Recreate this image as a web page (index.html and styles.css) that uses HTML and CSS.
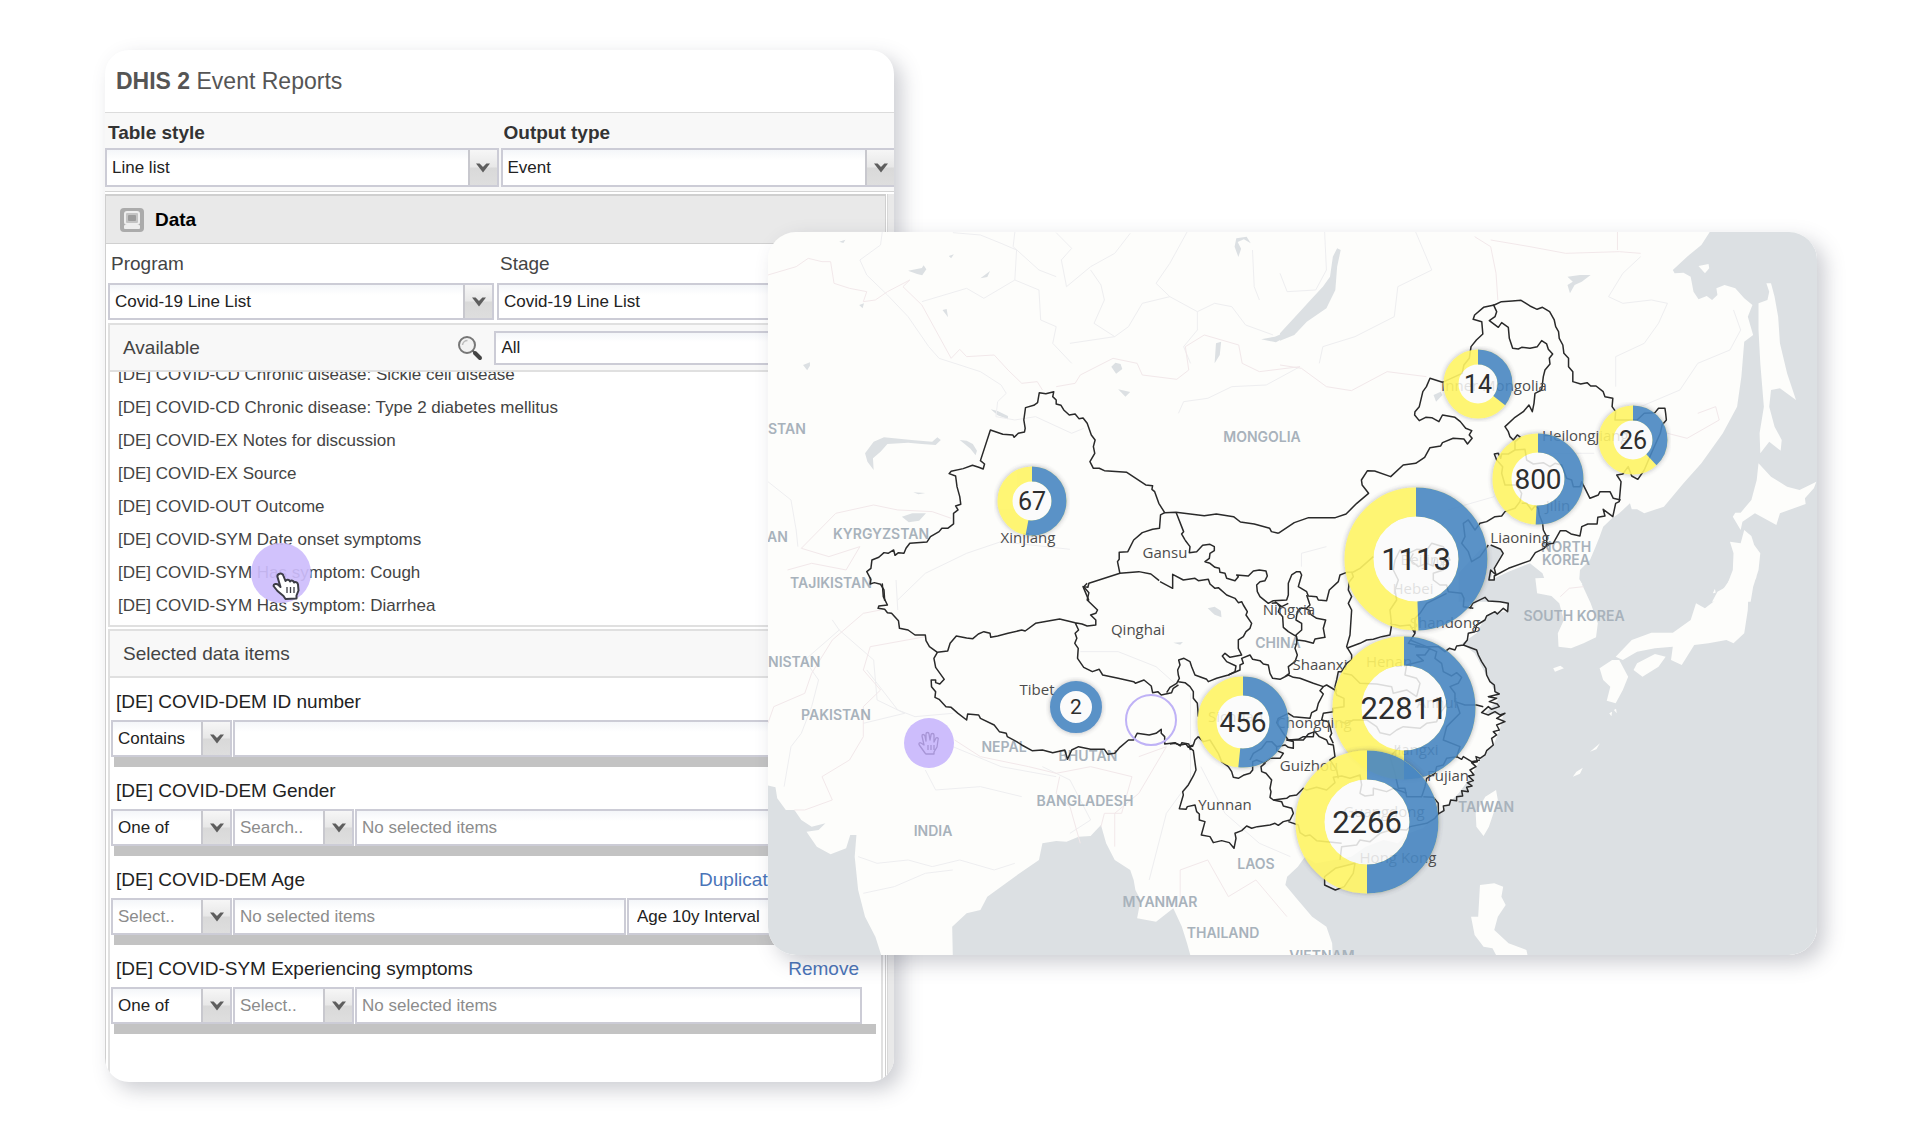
FILE: index.html
```html
<!DOCTYPE html>
<html lang="en">
<head>
<meta charset="utf-8">
<title>DHIS 2 Event Reports</title>
<link rel="stylesheet" href="styles.css">
</head>
<body>
<svg class="defs" width="0" height="0" aria-hidden="true">
  <symbol id="chevron" viewBox="0 0 16 12"><path d="M1 1.5h3.6L8 5l3.400-3.500H15L8 10.500z" fill="#5e5e5e"/></symbol>
</svg>
<main class="stage">
  <section class="report">
    <h1 class="report-title"><b>DHIS 2</b> Event Reports</h1>
    <div class="toolbar">
      <div class="field">
        <label for="style">Table style</label>
        <div class="combo tall"><select id="style"><option>Line list</option></select><span class="trigger"><svg><use href="#chevron"/></svg></span></div>
      </div>
      <div class="field">
        <label for="output">Output type</label>
        <div class="combo tall"><select id="output"><option>Event</option></select><span class="trigger"><svg><use href="#chevron"/></svg></span></div>
      </div>
    </div>
    <div class="body">
      <div class="panel">
        <h2 class="panel-title">
          <svg class="data-icon" viewBox="0 0 24 24"><rect width="24" height="24" rx="4" fill="#ababab"/><rect x="5" y="4" width="14" height="12" rx="2" fill="#c4c4c4" stroke="#eee" stroke-width="2"/><rect x="8" y="7" width="8" height="6" rx="1" fill="#9c9c9c"/><rect x="4" y="17" width="16" height="4" rx="1" fill="#eee"/></svg>
          Data
        </h2>
        <div class="pair">
          <div class="field">
            <label for="program">Program</label>
            <div class="combo"><select id="program"><option>Covid-19 Line List</option></select><span class="trigger"><svg><use href="#chevron"/></svg></span></div>
          </div>
          <div class="field">
            <label for="stage">Stage</label>
            <div class="combo"><select id="stage"><option>Covid-19 Line List</option></select><span class="trigger"><svg><use href="#chevron"/></svg></span></div>
          </div>
        </div>
        <div class="box">
          <div class="box-head">
            <label class="grow" for="filter">Available</label>
            <svg class="search-icon" viewBox="0 0 26 26"><circle cx="10" cy="10" r="8" fill="#f2f2f2" stroke="#777" stroke-width="2"/><path d="M5.500 10a5 5 0 0 1 5-4.500" fill="none" stroke="#bbb" stroke-width="1.500"/><path d="M15.500 15.500l3 3" stroke="#666" stroke-width="2"/><path d="M18 18l5 5" stroke="#444" stroke-width="4" stroke-linecap="round"/></svg>
            <input class="filter" id="filter" value="All">
          </div>
          <div class="list-wrap">
            <ul class="list">
              <li>[DE] COVID-CD Chronic disease: Sickle cell disease</li>
              <li>[DE] COVID-CD Chronic disease: Type 2 diabetes mellitus</li>
              <li>[DE] COVID-EX Notes for discussion</li>
              <li>[DE] COVID-EX Source</li>
              <li>[DE] COVID-OUT Outcome</li>
              <li>[DE] COVID-SYM Date onset symptoms</li>
              <li>[DE] COVID-SYM Has symptom: Cough</li>
              <li>[DE] COVID-SYM Has symptom: Diarrhea</li>
            </ul>
            <svg class="pointer" viewBox="0 0 60 60"><circle cx="30" cy="30" r="30" fill="#cdbdfc" fill-opacity=".92"/><path d="M28 31c2-1 4 0 4.500 2l2 5c1-2 4-1.500 4.500.500 1.500-1.500 3.500-1 4 1 2-1 3.500 0 4 2l.500 6-2 5v3l-11 .500-2-3-6-5-4-5c0-2 3-3 5-1l2 2-3-10c-.300-1 .500-2.500 1.500-3z" fill="#fff" stroke="#3c3c46" stroke-width="2" stroke-linejoin="round"/><path d="M36 44v6M39.500 44v6M43 44v6" stroke="#3c3c46" stroke-width="1.300"/></svg>
          </div>
        </div>
        <div class="box selected">
          <h3 class="box-head">Selected data items</h3>
          <div class="item">
            <div class="item-head"><label class="grow" for="id-op">[DE] COVID-DEM ID number</label><a href="#">Remove</a></div>
            <div class="row">
              <div class="combo short"><select id="id-op"><option>Contains</option></select><span class="trigger"><svg><use href="#chevron"/></svg></span></div>
              <input class="text" aria-label="ID number">
            </div>
          </div>
          <div class="item">
            <div class="item-head"><label class="grow" for="gender-op">[DE] COVID-DEM Gender</label><a href="#">Remove</a></div>
            <div class="row">
              <div class="combo short"><select id="gender-op"><option>One of</option></select><span class="trigger"><svg><use href="#chevron"/></svg></span></div>
              <div class="combo short"><input placeholder="Search.." aria-label="Search gender"><span class="trigger"><svg><use href="#chevron"/></svg></span></div>
              <input class="text" placeholder="No selected items" aria-label="Selected gender">
            </div>
          </div>
          <div class="item">
            <div class="item-head"><label class="grow" for="age-op">[DE] COVID-DEM Age</label><a href="#">Duplicate</a><a href="#">Remove</a></div>
            <div class="row">
              <div class="combo short"><input id="age-op" placeholder="Select.."><span class="trigger"><svg><use href="#chevron"/></svg></span></div>
              <input class="text" placeholder="No selected items" aria-label="Selected ages">
              <div class="combo interval"><select aria-label="Age interval"><option>Age 10y Interval</option></select><span class="trigger"><svg><use href="#chevron"/></svg></span></div>
            </div>
          </div>
          <div class="item">
            <div class="item-head"><label class="grow" for="sym-op">[DE] COVID-SYM Experiencing symptoms</label><a href="#">Remove</a></div>
            <div class="row">
              <div class="combo short"><select id="sym-op"><option>One of</option></select><span class="trigger"><svg><use href="#chevron"/></svg></span></div>
              <div class="combo short"><input placeholder="Select.." aria-label="Select symptom"><span class="trigger"><svg><use href="#chevron"/></svg></span></div>
              <input class="text" placeholder="No selected items" aria-label="Selected symptoms">
            </div>
          </div>
        </div>
      </div>
      <div class="scroll-strip"></div>
    </div>
  </section>

  <section class="map-card">
    <svg class="map" viewBox="0 0 1049 723" role="img" aria-label="Map of cases by province">
      <defs>
        <filter id="soft" x="-20%" y="-20%" width="140%" height="140%"><feDropShadow dx="0" dy="0" stdDeviation="2.500" flood-color="#445" flood-opacity=".45"/></filter>
      </defs>
      <rect width="1049" height="723" fill="#fdfdfb"/>

      <!-- sea -->
      <g class="sea">
        <g transform="translate(512 -12) scale(.3571 .3333)">
          <path d="M1207 30L1180 75 1140 110 1100 150 1105 160 1130 158 1150 170 1158 215 1172 238 1195 228 1210 240 1225 225 1222 205 1245 195 1275 205 1300 235 1323 255 1310 290 1325 345 1300 365 1292 470 1280 560 1240 640 1180 730 1130 790 1075 860 1020 880 1000 868 985 868 980 850 950 880 930 895 905 920 895 950 880 990 868 1020 840 1050 838 1080 860 1110 875 1145H1600V30z"/>
          <path d="M500 1060L560 990 590 975 625 995 600 1040 590 1080 640 1055 700 1030 735 1060 745 1090 715 1115 725 1145H500z"/>
          <path d="M170 90L160 85 148 110 140 170 120 200 90 235 60 270 0 340V362L40 345 75 305 130 265 155 210 160 140z"/>
          <path d="M805 170L840 165 870 165 845 185 825 195 812 220 805 195 820 185zM430 525l20-10 5 10-18 20z"/>
        </g>
        <g transform="translate(512 348) scale(.3571 .3333)">
          <path d="M590 0L560 35 545 70 570 55 635 70 635 95 600 95 570 120 550 160 510 190 545 220 570 270 600 330 610 360 575 400 625 405 615 450 600 490 560 540 535 590 500 640 445 700 400 745 360 760 330 790 290 780 240 800 200 830 150 840 100 850 70 830 50 860 20 890 15 915 50 960 90 1010 130 1040 146 1090 148 1135H1600V50z"/>
        </g>
        <g transform="translate(-8 348) scale(.3444 .3333)">
          <path d="M15 615L45 622 50 655 75 690 100 690 120 720 150 740 190 730 170 750 135 755 165 800 205 823 250 805 262 765 280 765 275 830 285 930 305 1010 335 1070 355 1135H15z"/>
          <path d="M560 1135L558 1040 600 1000 640 990 660 950 740 890 810 840 820 790 860 783 890 785 925 770 960 768 990 735 1005 790 1030 840 1075 870 1085 900 1090 930 1105 960 1095 1015 1150 1025 1200 985 1225 1040 1240 1090 1252 1135z"/>
          <path d="M1300 85l20-5 18 12 2 20-20-8zM1200 188l28-2-8 8z"/>
        </g>
        <g transform="translate(-8 -12) scale(.3444 .3333)">
          <path d="M305 700L330 665 360 652 440 660 500 665 515 652 525 660 510 675 470 672 430 668 370 672 350 695 328 715 330 750 312 725zM412 890l30-10 40 0-20 22-30 5zM430 152l40-8 5-8 8 12-12 18-15-4zM670 568l20 5 30 15v10l-30-12zM580 660l20 2 18 10 12 20-4 14-15-20zM1020 440l12-12 15 4 5 15-18 14zM1320 430l4-60 15-5-4 40zM1455 358l40-8 45-20 20-35 8-5v30l-30 25-40 22zM1378 80l5-25 30-5 12 20-20-12-18 8 10 20-8 25zM640 175l28-22-8 18zM1040 508l35 8-14 14zM125 435l20-8v10l-8 14zM288 255l14-5-4 15zM530 270l12-3 4 25zM230 65l18-6-6 10zM548 108l15-5-8 12zM445 817l35 2-20 4z"/>
        </g>
      </g>

      <!-- islands and peninsulas -->
      <g class="land">
        <g transform="translate(512 -12) scale(.3571 .3333)">
          <path d="M1375 190L1385 230 1395 290 1400 370 1420 460 1445 540 1400 505 1375 510 1370 560 1385 620 1405 660 1402 692 1370 665 1345 700 1343 640 1355 560 1345 430 1340 330 1340 250 1365 240 1370 215 1362 190z"/>
          <path d="M1340 730L1375 770 1420 800 1455 810 1502 785 1495 805 1470 835 1472 852 1400 880 1390 915 1330 880 1295 905 1290 930 1268 890 1275 878 1290 878 1320 840 1335 780z"/>
          <path d="M1300 930L1320 948 1328 975 1345 1000 1340 1050 1325 1100 1318 1145H1210L1225 1115 1250 1100 1268 1050 1270 1000 1260 965 1290 970z"/>
          <path d="M1172 138L1200 132 1202 145 1190 160z"/>
        </g>
        <g transform="translate(512 348) scale(.3571 .3333)">
          <path d="M715 -5L720 40 760 48 782 70 795 120 778 160 780 200 815 205 850 190 885 172 890 130 870 70 840 0 830 -10z"/>
          <path d="M940 230L985 180 1040 158 1100 158 1150 120 1165 70 1190 85 1220 60 1265 -10H1335L1312 30 1310 90 1300 160 1270 190 1250 180 1200 190 1160 195 1125 255 1095 240 1100 200 1050 205 1000 215 960 240z"/>
          <path d="M895 265L930 240 950 240 975 290 960 330 940 370 915 362 925 320 905 300zM1000 250L1050 222 1080 230 1060 260 1015 290 990 270zM765 265l20-8 10 8-25 10z"/>
          <path d="M605 630L610 660 585 740 570 768 550 740 548 700 575 650zM560 915L600 910 625 920 620 950 632 975 610 1010 600 1050 640 1090 690 1110 695 1135H610L595 1105 570 1100 545 1065 535 1010 555 1010zM125 890L155 865 210 850 205 880 180 920 155 930 125 915zM868 515l28-25-10 18zM820 590l10-15 18-12-8 18zM922 400l8-5-2 14zM935 390l6-4 2 14zM1212 40l6-14 2 12z"/>
        </g>
      </g>

      <!-- rivers and roads -->
      <g class="river">
        <g transform="translate(-8 -12) scale(.3444 .3333)">
          <path d="M355 36L350 75 290 120 310 165 370 225 430 290 490 380 520 415 640 455 700 495 715 520 690 545 685 590 740 600 800 590 905 640 940 625M560 38L640 45 700 70 745 90 740 180 650 235 600 205 470 245M740 36L735 80 810 150 860 170M860 38L905 85 875 120 890 200 960 140 1030 100 1075 40M740 180L810 210 815 300 860 320 850 370 905 430M960 150L990 195 1000 240 970 310 1030 350M1240 36L1190 130 1150 190 1190 230 1110 250 1070 320 1030 350 900 370M1190 230L1270 275 1320 250 1370 260 1410 315 1490 345M1270 275L1270 330 1230 380 1250 430M1430 90L1435 200 1450 240M23 785L90 840 105 930 110 980M400 1140L480 1060 600 1000 700 965 900 988M1215 580L1230 545 1300 535 1370 500 1470 495 1568 440"/>
        </g>
        <g transform="translate(-8 348) scale(.3444 .3333)">
          <path d="M210 120L230 150 130 240 170 300 150 380 120 460 90 500 70 620M230 150L330 240 340 360 420 400 300 430M395 0L400 90M310 270L400 390 450 410 560 400M820 560L900 600 960 720 900 760M480 570L510 630 640 620 760 650M285 830L340 850 430 840 500 860 580 840 680 870 740 850M300 940L390 920 480 880 560 870M930 215L1040 215 1150 260 1215 320M1250 340L1250 600 1180 700 1130 900M1280 560L1350 700 1450 790 1540 830M560 500L700 560 860 590"/>
        </g>
        <g transform="translate(512 -12) scale(.3571 .3333)">
          <path d="M125 36L130 150 100 210 20 215 0 160M380 36L425 150 330 200 320 290 210 350 120 380 110 430M940 500L940 410 1020 370 1060 310 1085 250 1040 240 960 250 920 230 960 160 1010 110M1270 270L1290 330 1260 390 1170 430 1120 510 1010 560M60 1040L60 1000 130 980M470 870L600 830M740 700L880 700"/>
        </g>
      </g>
      <g class="frontier">
        <g transform="translate(-8 -12) scale(.3444 .3333)">
          <path d="M23 165L105 140 140 115 180 125 205 125 215 190 260 205 310 215 300 245 335 240 370 215 435 180 415 200 470 255 555 415 580 388 600 410 680 405 720 450 760 490 805 485 820 510M860 500L915 490 930 465 1025 415 1095 430 1110 465 1210 478 1245 450 1235 380 1290 345 1390 375 1400 430 1450 455 1568 440M120 985L220 880 330 855 400 870 500 875 555 895M120 985L200 1010 290 980 250 1050 150 1030 80 1050"/>
        </g>
        <g transform="translate(-8 348) scale(.3444 .3333)">
          <path d="M23 430L40 380 130 340 150 280 210 180 300 100 350 90M210 660L130 690 100 690M210 660L180 590 260 540 300 470 300 380 350 330 300 270 320 200 480 170M565 480L640 530 780 560 860 580 960 560 1080 590 1050 700 1000 700 990 740M870 590L860 640 900 680 930 790M1220 960L1220 870 1300 840 1360 950 1440 900 1530 1010M1100 530L1180 500 1100 640 1030 700 1030 800"/>
        </g>
        <g transform="translate(512 -12) scale(.3571 .3333)">
          <path d="M0 435L60 445 130 500 200 512 300 455 410 470M545 50L590 80 605 160 610 240M590 60L700 80 800 100 950 95 1010 100M1085 640L1140 655 1230 600 1220 560 1170 580M785 1130L810 1105 850 1100M945 36V90"/>
        </g>
      </g>

      <!-- country names -->
      <g class="country">
        <text x="0" y="202">STAN</text>
        <text class="mid" x="113" y="307">KYRGYZSTAN</text>
        <text x="-1" y="310">AN</text>
        <text class="mid" x="63" y="356">TAJIKISTAN</text>
        <text class="mid" x="494" y="210">MONGOLIA</text>
        <text x="0" y="435">NISTAN</text>
        <text class="mid" x="68" y="488">PAKISTAN</text>
        <text class="mid" x="236" y="520">NEPAL</text>
        <text class="mid" x="320" y="529">BHUTAN</text>
        <text class="mid" x="317" y="574">BANGLADESH</text>
        <text class="mid" x="165" y="604">INDIA</text>
        <text class="mid" x="488" y="637">LAOS</text>
        <text class="mid" x="392" y="675">MYANMAR</text>
        <text class="mid" x="455" y="706">THAILAND</text>
        <text class="mid" x="554" y="729">VIETNAM</text>
        <text class="mid" x="510" y="416">CHINA</text>
        <text class="mid" x="798" y="320">NORTH</text>
        <text class="mid" x="798" y="333">KOREA</text>
        <text class="mid" x="806" y="389">SOUTH KOREA</text>
        <text class="mid" x="718" y="580">TAIWAN</text>
      </g>

      <!-- province borders -->
      <g class="border">
        <g transform="translate(-8 -12) scale(.3444 .3333)">
          <path d="M362 1142L360 1110 350 1093 332 1088 320 1092 322 1078 310 1055 322 1045 325 1020 345 1012 360 998 372 1000 388 990 392 1006 402 998 418 1000 424 985 435 970 485 966 495 950 520 935 528 925 545 925 562 912 562 880 575 870 568 858 583 853 580 830 572 800 568 768 549 761 555 754 590 746 617 736 635 742 648 747 652 732 640 722 669 630 705 643 734 645 738 652 750 640 768 636 770 625 766 600 771 563 795 556 806 548 811 518 830 521 853 515 850 530 860 540 860 552 874 556 882 570 898 585 915 582 926 596 938 594 950 610 962 645 973 660 968 680 972 700 958 725 968 745 985 745 1000 752 1065 757 1120 795 1140 797 1138 808 1146 815 1158 850 1175 878 1208 877 1290 887 1325 882 1375 890 1395 906 1435 912 1480 925 1485 935 1505 940"/>
          <path d="M1208 877L1230 935 1224 942 1234 960M1175 878L1163 885 1160 925 1140 928 1110 938 1085 960 1068 995 1043 997 1043 1018 1038 1025 1045 1060 955 1090 952 1102 938 1100 955 1142M1045 1060L1100 1055 1135 1062 1159 1082"/>
        </g>
        <g transform="translate(-8 348) scale(.3444 .3333)">
          <path d="M355 10L358 50 370 75 345 78 343 85 362 88 370 98 382 100 402 122 405 145 430 150 450 165 480 165 482 182 492 200 515 217 545 213 552 190 570 168 600 174 618 176 634 162 650 155 668 160 670 172 690 168 720 160 760 150 770 153 800 130 870 117 915 128 925 150 915 160 920 175 914 190 924 205 922 235 940 262 965 275 985 268 995 285 1040 295 1085 305 1090 310 1115 300 1136 318 1140 338 1155 335 1165 345 1195 338 1200 325 1215 315M950 10L940 20 955 38 950 60 980 90 975 100 960 105 975 120 975 135 950 138 935 132 915 128"/>
          <path d="M515 217L505 235 510 262 535 298 522 312 510 308 510 300 497 300 498 320 510 335 508 352 520 358 540 380 555 382 575 400 600 420 603 402 635 405 640 415 680 435 695 455 715 460 718 470 745 485 760 495 790 512 820 510 850 518 885 510 893 538 905 510 925 500 960 508 1000 508 1010 523 1030 520 1045 502 1070 480 1085 480 1095 460 1130 465 1150 460 1165 448 1165 460 1175 470 1175 492 1205 488 1220 498 1225 488 1245 492 1250 510"/>
        </g>
        <g transform="translate(392 308) scale(.3333)">
          <path d="M75 0L90 20 88 38 110 35 128 16 150 13 163 20 163 32 150 40 148 55 135 65 150 70 165 82 178 85 180 97 195 100 200 115 225 122 235 110 230 105 265 108 280 93 298 90 318 93 322 108 315 122 300 125 290 135 292 155 300 170 325 190 340 182 380 180 385 165 385 130 395 105 410 95 420 95 425 105 415 140 440 155 445 168 470 170 475 180 500 182 508 150 535 125 540 105 560 97 580 96 600 85 640 50"/>
          <path d="M0 125L38 145 38 103 70 120 105 115 115 122 145 118 150 132 165 145 175 143 200 165 225 175 235 188 245 185 250 195 262 215 258 225 275 250 270 265 258 275 250 290 235 300 235 325 245 345 210 352 195 340 187 348 200 365 228 378 225 395 205 405 170 415 145 425 140 418 105 405 95 380 90 365 72 355 56 360 60 375 53 390 55 405 58 415 50 430 30 442 20 458M55 425L75 428 90 440 100 455 100 475 112 490 115 530M115 590L105 600 100 615 85 620 100 632 108 690 100 708 85 735 68 755 70 765 58 806 78 808 82 800 105 795 110 815 118 822 118 840 135 845 124 885 150 890 160 908 185 902 208 908 222 925 228 895 225 880 245 872 260 858 275 865 292 860 330 855 345 850 355 856 370 845 390 840 400 820 395 805 370 798 365 785 340 780 330 772 333 755 330 745 335 720 318 700 305 695 303 680 315 670 290 660 278 665 278 690 270 700 250 706 235 715 220 712 215 695 205 680 185 665 175 640 150 600 130 605 115 590"/>
          <path d="M100 618L85 622 78 612 60 615 45 610 30 612M385 845L415 855 420 878 435 888 450 885 470 902 500 905 545 910M340 780L380 775 390 768 410 765 430 745 440 750 470 742 500 750 525 728 520 712 545 708 570 715 600 705 605 735 600 760 615 768 640 765 640 745 680 755 700 745 740 760M310 670L330 655 360 655 370 640 350 632 350 620 375 615 385 622 400 625 400 605 380 600 430 600 445 582 465 575 478 590 500 600 505 612 520 615 525 650 510 660 530 690 535 715M350 620L335 605 320 605 305 625 280 640 270 660"/>
          <path d="M205 405L240 390 240 375 250 370 245 355 270 345 278 358 300 362 310 372 325 375 330 400 338 415 360 418 385 405 400 412 420 415 460 430 490 440 480 452 490 462 475 490 470 510 455 518 450 535 400 530 385 520 355 535 350 548 370 580 385 600 415 598 430 590 460 590 462 575M490 440L500 435 525 450 530 465 552 475 552 500 520 505 520 515 490 520 485 540 505 545 510 560 515 580 510 590 520 610M335 190L350 188 360 200 355 215 368 230 370 262 385 275 410 290 410 310 405 325 412 345 405 365 385 380 388 400 375 410M345 185L365 200 385 190M440 165L445 180 450 195 440 205 420 205 412 215 408 240 425 250 425 270 408 285 412 300 435 303 460 310 465 297 495 292 490 265 497 240 470 235 450 222 450 212 435 205"/>
          <path d="M575 95L580 110 568 125 565 150 575 170 565 190 575 210 572 255 570 285 560 320 575 345 575 360 560 370 545 395 535 395 530 420 525 440 530 455M560 325L600 310 620 300 640 298 665 290 690 285 695 255 690 210 710 180 705 150 715 120 700 90 705 60 720 30 745 40 770 28 800 30 815 10 850 20 870 60 850 65 850 90 820 100 820 120 840 135 860 135 865 155 905 160 912 175 910 200 940 205M760 40L750 60 775 80 800 70 820 78 825 55M690 250L720 258 750 255 765 280 745 310 780 318 810 325 795 345 770 345 790 362 740 375 735 405 770 415 780 430 770 470M765 280L765 235 780 220 800 190 860 160M550 400L575 405 600 430 650 432 695 440 700 460 740 450 770 470M540 545L560 550 580 540 620 540 650 560 660 578 690 585 710 570 730 560 780 565 800 550 830 545 840 520 855 500 860 490M765 320L800 322 830 335 825 355 845 370 850 395 875 408 890 398 905 412 895 430 870 440 885 460 885 485 915 495 950 495 970 500"/>
          <path d="M930 205L938 190 975 172 985 183 1020 185 1045 190 1043 215 1030 205 1012 222 1005 215 980 228 975 240 950 255 945 275 925 280 922 300 910 315 950 330 955 345 965 365 978 385 980 405 990 425 1003 435 1005 455 1018 462 985 470 1010 475 988 485 1012 492 1018 500 995 508 985 500 965 518 985 525 1005 515 1020 525 1035 520 1010 535 1035 545 1010 555 1018 570 1000 575 1010 585 995 595 1000 615 980 632 975 645 960 655 948 650 952 665 935 668 948 680 930 690 942 705 925 708 940 722 922 728 936 738 920 742 925 755 905 752 908 768 890 770 890 782 872 780 868 795 850 798 852 812 835 822 825 835 800 850 750 860 740 870 700 868 660 880 630 905 600 900 590 915 545 920 540 960M910 315L890 318 885 330 868 325 855 335 835 320 800 320 750 300M890 650L900 620 850 600 860 560 900 520 890 490M890 650L905 658 910 650 935 665 960 660M890 650L860 655 850 675 830 680 825 700 800 715 795 740 785 770 740 770 735 745 715 745 705 700 690 650 720 620M790 770L820 772 835 790 835 820"/>
        </g>
        <g transform="translate(512 348) scale(.3571 .3333)"><path d="M125 890L155 865 210 850 205 880 180 920 155 930 125 915z"/></g>
        <g transform="translate(512 -12) scale(.3571 .3333)">
          <path d="M-5 940L40 908 80 893 155 893 185 882 215 850 248 820 230 795 228 780 245 752 265 753 310 770 345 735 380 730 405 712 420 683 450 678 455 668 485 655 515 657 525 672 538 655 530 645 537 632 520 625 505 605 490 592 455 585 445 605 425 593 408 592 390 602 377 585 378 575 390 560 400 515 410 500 420 475 455 487 510 460 515 435 530 415 535 380 550 360 568 342 565 305 541 298 545 285 570 262 600 255 620 245 650 243 675 241 700 258 720 268 735 262 755 275 768 300 772 320 780 335 782 355 792 375 795 400 808 415 808 440 820 455 820 485 842 492 860 488 870 498 885 498 905 515 910 530 932 535 930 560 940 575 938 600 1000 600 1020 580 1050 578 1060 565 1078 565 1080 580 1082 600 1070 615 1065 640 1040 700 1020 750 1002 778 985 768 975 740 960 762 943 765 955 785 950 845 940 850 932 890 905 868 910 888 890 892 888 912 862 912 845 920 840 948 815 942 800 932 785 932 765 970 750 972 740 985 715 998 700 1022 640 1045 600 1068 600 1080 585 1080 590 1050 605 1065 600 1045 625 1000 618 988 590 975"/>
        </g>
        <g transform="translate(612 58) scale(.3333)">
          <path d="M340 43L350 65 345 80 328 92 355 112 365 98 385 112 388 145 398 175 415 177 425 172 450 175 472 170 485 152 500 162 505 178 518 192 508 205 510 222 495 240 490 260 485 300 465 310 462 340 457 365 447 345 430 365 405 382 375 410 385 425 390 440 400 450 412 435 422 442 405 455 405 480 435 478 440 510 460 522 490 518 510 530 525 520 545 525 560 565 575 570 580 590 600 590 605 575 630 625 655 615 660 605 690 605 700 625 722 630M405 480L385 492 365 492 362 505 355 490 343 492 350 510 368 530 365 550 375 585 410 585 425 610 420 635 405 655 375 665 365 678 345 680 320 695 300 700 285 720 265 690 250 700 255 740 245 760 265 785 275 815 300 800 325 765M425 640L440 640 455 660 465 648 475 655 478 675 488 700 490 720 500 740 500 765"/>
        </g>
      </g>

      <!-- province names -->
      <g class="province">
        <text class="mid" x="260" y="311">Xinjiang</text>
        <text class="mid" x="397" y="326">Gansu</text>
        <text class="mid" x="726" y="159">Inner Mongolia</text>
        <text x="774" y="209">Heilongjiang</text>
        <text class="mid" x="790" y="279">Jilin</text>
        <text class="mid" x="752" y="311">Liaoning</text>
        <text class="mid" x="656" y="333">Beijing</text>
        <text class="mid" x="645" y="362">Hebei</text>
        <text class="mid" x="677" y="396">Shandong</text>
        <text class="mid" x="621" y="435">Henan</text>
        <text class="mid" x="552" y="438">Shaanxi</text>
        <text class="mid" x="669" y="476">Anhui</text>
        <text class="mid" x="648" y="523">Jiangxi</text>
        <text class="mid" x="546" y="496">Chongqing</text>
        <text class="mid" x="541" y="539">Guizhou</text>
        <text class="mid" x="680" y="549">Fujian</text>
        <text class="mid" x="616" y="585">Guangdong</text>
        <text class="mid" x="630" y="631">Hong Kong</text>
        <text class="mid" x="521" y="383">Ningxia</text>
        <text class="mid" x="370" y="403">Qinghai</text>
        <text class="mid" x="269" y="463">Tibet</text>
        <text x="440" y="490">Sichuan</text>
        <text class="mid" x="457" y="578">Yunnan</text>
      </g>

      <!-- donuts: ring of shares with the total in the middle -->
      <g class="donut" transform="translate(264 269)"><g filter="url(#soft)"><circle class="hole" r="21"/><circle class="yellow" r="27" stroke-width="15"/><circle class="blue" r="27" stroke-width="15" pathLength="360" stroke-dasharray="191 360" transform="rotate(-90)"/></g><text class="n24" y="9">67</text></g>
      <g class="donut" transform="translate(710 152)"><g filter="url(#soft)"><circle class="hole" r="21"/><circle class="yellow" r="27" stroke-width="15"/><circle class="blue" r="27" stroke-width="15" pathLength="360" stroke-dasharray="128 360" transform="rotate(-90)"/></g><text class="n24" y="9">14</text></g>
      <g class="donut" transform="translate(865 208)"><g filter="url(#soft)"><circle class="hole" r="21"/><circle class="yellow" r="27" stroke-width="15"/><circle class="blue" r="27" stroke-width="15" pathLength="360" stroke-dasharray="137 360" transform="rotate(-90)"/></g><text class="n24" y="9">26</text></g>
      <g class="donut" transform="translate(770 247)"><g filter="url(#soft)"><circle class="hole" r="28"/><circle class="yellow" r="36" stroke-width="19"/><circle class="blue" r="36" stroke-width="19" pathLength="360" stroke-dasharray="183 360" transform="rotate(-90)"/></g><text class="n27" y="10">800</text></g>
      <g class="donut" transform="translate(475 490)"><g filter="url(#soft)"><circle class="hole" r="28"/><circle class="yellow" r="36" stroke-width="19"/><circle class="blue" r="36" stroke-width="19" pathLength="360" stroke-dasharray="186 360" transform="rotate(-90)"/></g><text class="n27" y="10">456</text></g>
      <g class="donut" transform="translate(308 475)"><g filter="url(#soft)"><circle class="hole" r="17"/><circle class="blue" r="21" stroke-width="10"/></g><text class="n21" y="7">2</text></g>
      <g class="donut" transform="translate(648 327)"><g filter="url(#soft)"><circle class="hole" r="43"/><circle class="yellow" r="57" stroke-width="29"/><circle class="blue" r="57" stroke-width="29" pathLength="360" stroke-dasharray="178 360" transform="rotate(-90)"/></g><text class="n30" y="11">1113</text></g>
      <g class="donut" transform="translate(636 476)"><g filter="url(#soft)"><circle class="hole" r="43"/><circle class="yellow" r="57" stroke-width="29"/><circle class="blue" r="57" stroke-width="29" pathLength="360" stroke-dasharray="180 360" transform="rotate(-90)"/></g><text class="n30" y="11">22811</text></g>
      <g class="donut" transform="translate(599 590)"><g filter="url(#soft)"><circle class="hole" r="43"/><circle class="yellow" r="57" stroke-width="29"/><circle class="blue" r="57" stroke-width="29" pathLength="360" stroke-dasharray="180 360" transform="rotate(-90)"/></g><text class="n30" y="11">2266</text></g>

      <!-- drag start and end -->
      <circle cx="383" cy="488" r="25" fill="none" stroke="#bfb2f6" stroke-width="2"/>
      <circle cx="161" cy="511" r="25" fill="#cdbdfc"/>
      <path d="M157 521l-5-7c-2-2-1-4 1-3l3 2-2-9c0-2 2-2 3 0l1 5v-7c0-2 3-2 3 0l1 6 1-5c0-2 3-2 3 0v7l2-4c1-1 3 0 2 2l-1 7-3 5v2h-8zM160 513v5M163 513v5M166 513v5" fill="none" stroke="#a795d6" stroke-width="1.300" stroke-linejoin="round"/>
    </svg>
  </section>
</main>
</body>
</html>
```
FILE: styles.css
```css
* { box-sizing: border-box; }

body {
  margin: 0;
  background: #fff;
  font-family: "Liberation Sans", Arial, sans-serif;
  font-size: 17px;
  color: #222;
}

.defs { position: absolute; }

.stage {
  display: grid;
  grid-template-columns: minmax(0, 663fr) minmax(0, 126fr) minmax(0, 923fr);
  align-items: start;
  padding: 50px 103px 51px 105px;
}

/* report form */
.report {
  grid-column: 1 / 3;
  grid-row: 1;
  display: flex;
  flex-direction: column;
  border-radius: 24px;
  overflow: hidden;
  background: #fff;
  box-shadow: 8px 8px 20px rgba(60, 65, 85, .26);
}

.report-title {
  margin: 0;
  padding: 0 11px;
  font-size: 23px;
  line-height: 62px;
  font-weight: 400;
  color: #555;
}

.toolbar {
  display: grid;
  grid-template-columns: 1fr 1fr;
  gap: 2px;
  padding-bottom: 4px;
  border-top: 1px solid #dcdcdc;
  border-bottom: 1px solid #d4d4d4;
  background: #f8f8f8;
}

.field label {
  display: block;
  padding-left: 3px;
  font-size: 19px;
  line-height: 39px;
  color: #444;
}

.toolbar .field label {
  line-height: 35px;
  padding-top: 2px;
  margin-bottom: -2px;
  font-weight: 700;
  color: #333;
}

.combo {
  display: flex;
  min-width: 0;
  height: 37px;
  border: 2px solid #ccccd6;
  background: #fff;
}

.combo.tall { height: 39px; }
.toolbar .field:last-child .combo { border-right: 0; }

.combo select,
.combo input,
.text,
.filter {
  flex: 1;
  min-width: 0;
  margin: 0;
  padding: 0 5px;
  border: 0;
  border-radius: 0;
  outline: 0;
  appearance: none;
  background: linear-gradient(#f4f6f9, #fff 30%);
  font: inherit;
  color: #222;
}

::placeholder { color: #8c8c8c; opacity: 1; }

.trigger {
  display: flex;
  flex: 0 0 29px;
  align-items: center;
  justify-content: center;
  border-left: 2px solid #c8c8ce;
  background: linear-gradient(#f6f6f6, #e8e8e8 48%, #d9d9d9 52%, #dedede);
}

.trigger svg { width: 16px; height: 12px; }

.body {
  display: flex;
  padding-top: 2px;
}

.panel {
  flex: 1;
  min-width: 0;
  border: 1px solid #cfcfcf;
  border-top-width: 2px;
  border-bottom: 0;
}

.scroll-strip {
  flex: 0 0 7px;
  margin-left: 1px;
  border-left: 1px solid #d8d8d8;
  background: #e9e9e9;
}

.panel-title {
  display: flex;
  align-items: center;
  gap: 11px;
  height: 48px;
  margin: 0;
  padding-left: 14px;
  border-bottom: 1px solid #d0d0d0;
  background: #e9e9e9;
  font-size: 19px;
  color: #000;
}

.data-icon { width: 24px; height: 24px; }

.pair {
  display: grid;
  grid-template-columns: 1fr 1fr;
  gap: 3px;
  padding: 0 2px 3px;
}

.box {
  margin: 0 2px;
  border: 2px solid #e0e0e0;
}

.box + .box { margin-top: 2px; }

.box-head {
  display: flex;
  align-items: center;
  gap: 11px;
  height: 47px;
  margin: 0;
  padding-left: 13px;
  border-bottom: 2px solid #e0e0e0;
  background: #f8f8f8;
  font-size: 19px;
  font-weight: 400;
  color: #444;
}

.grow { flex: 1; }

.search-icon { width: 26px; height: 26px; }

.filter {
  flex: 0 0 51%;
  height: 34px;
  border: 2px solid #ccccd6;
  font-size: 17px;
}

.list-wrap {
  position: relative;
  height: 253px;
  overflow: hidden;
}

.list {
  margin: -14px 0 0;
  padding: 0 0 0 8px;
  list-style: none;
  line-height: 33px;
  color: #444;
}

.pointer {
  position: absolute;
  top: 171px;
  left: 141px;
  width: 60px;
  height: 60px;
}

.selected {
  border-bottom: 0;
  padding-bottom: 48px;
}

.item {
  display: flex;
  flex-direction: column;
}

.item::after {
  content: "";
  height: 10px;
  margin: 0 5px 0 4px;
  background: #c3c3c3;
}

.item-head {
  display: flex;
  gap: 10px;
  padding: 13px 22px 7px 6px;
  font-size: 19px;
  line-height: 22px;
  color: #222;
}

.item-head a { color: #4a74b8; text-decoration: none; }

.row {
  display: flex;
  gap: 1px;
  height: 37px;
  margin: 0 19px 0 1px;
}

.combo.short { flex: 0 0 121px; }
.combo.interval { flex: 0 0 235px; }
.combo.interval select { padding-left: 8px; }

.text {
  border: 2px solid #ccccd6;
}

/* map */
.map-card {
  grid-column: 2 / 4;
  grid-row: 1;
  margin-top: 182px;
  border-radius: 28px;
  overflow: hidden;
  box-shadow: 8px 8px 20px rgba(60, 65, 85, .26);
}

.map { display: block; width: 100%; height: auto; }

.sea { fill: #dce0e3; }
.land { fill: #fdfdfb; }
.river path, .frontier path, .border path { fill: none; vector-effect: non-scaling-stroke; stroke-linejoin: round; }
.river path { stroke: #eeeef0; stroke-width: 1; }
.frontier path { stroke: #f2e8ea; stroke-width: 1; }
.border path { stroke: #2a2a2a; stroke-width: 1.5; }

.mid { text-anchor: middle; }
.country { font: 600 14px Inter, sans-serif; fill: #a8b2bb; }
.province { font: 15px "Open Sans", "Noto Sans", sans-serif; fill: #4c4c4c; }

.donut circle { fill: none; }
.donut > g { opacity: .9; }
.donut .hole { fill: #fff; fill-opacity: .9; }
.donut .yellow { stroke: #fff565; }
.donut .blue { stroke: #4a87c2; }
.donut text { font-family: Roboto, sans-serif; text-anchor: middle; fill: #2e2e2e; }
.n21 { font-size: 21px; }
.n24 { font-size: 25px; }
.n27 { font-size: 28px; }
.n30 { font-size: 31px; }
```
